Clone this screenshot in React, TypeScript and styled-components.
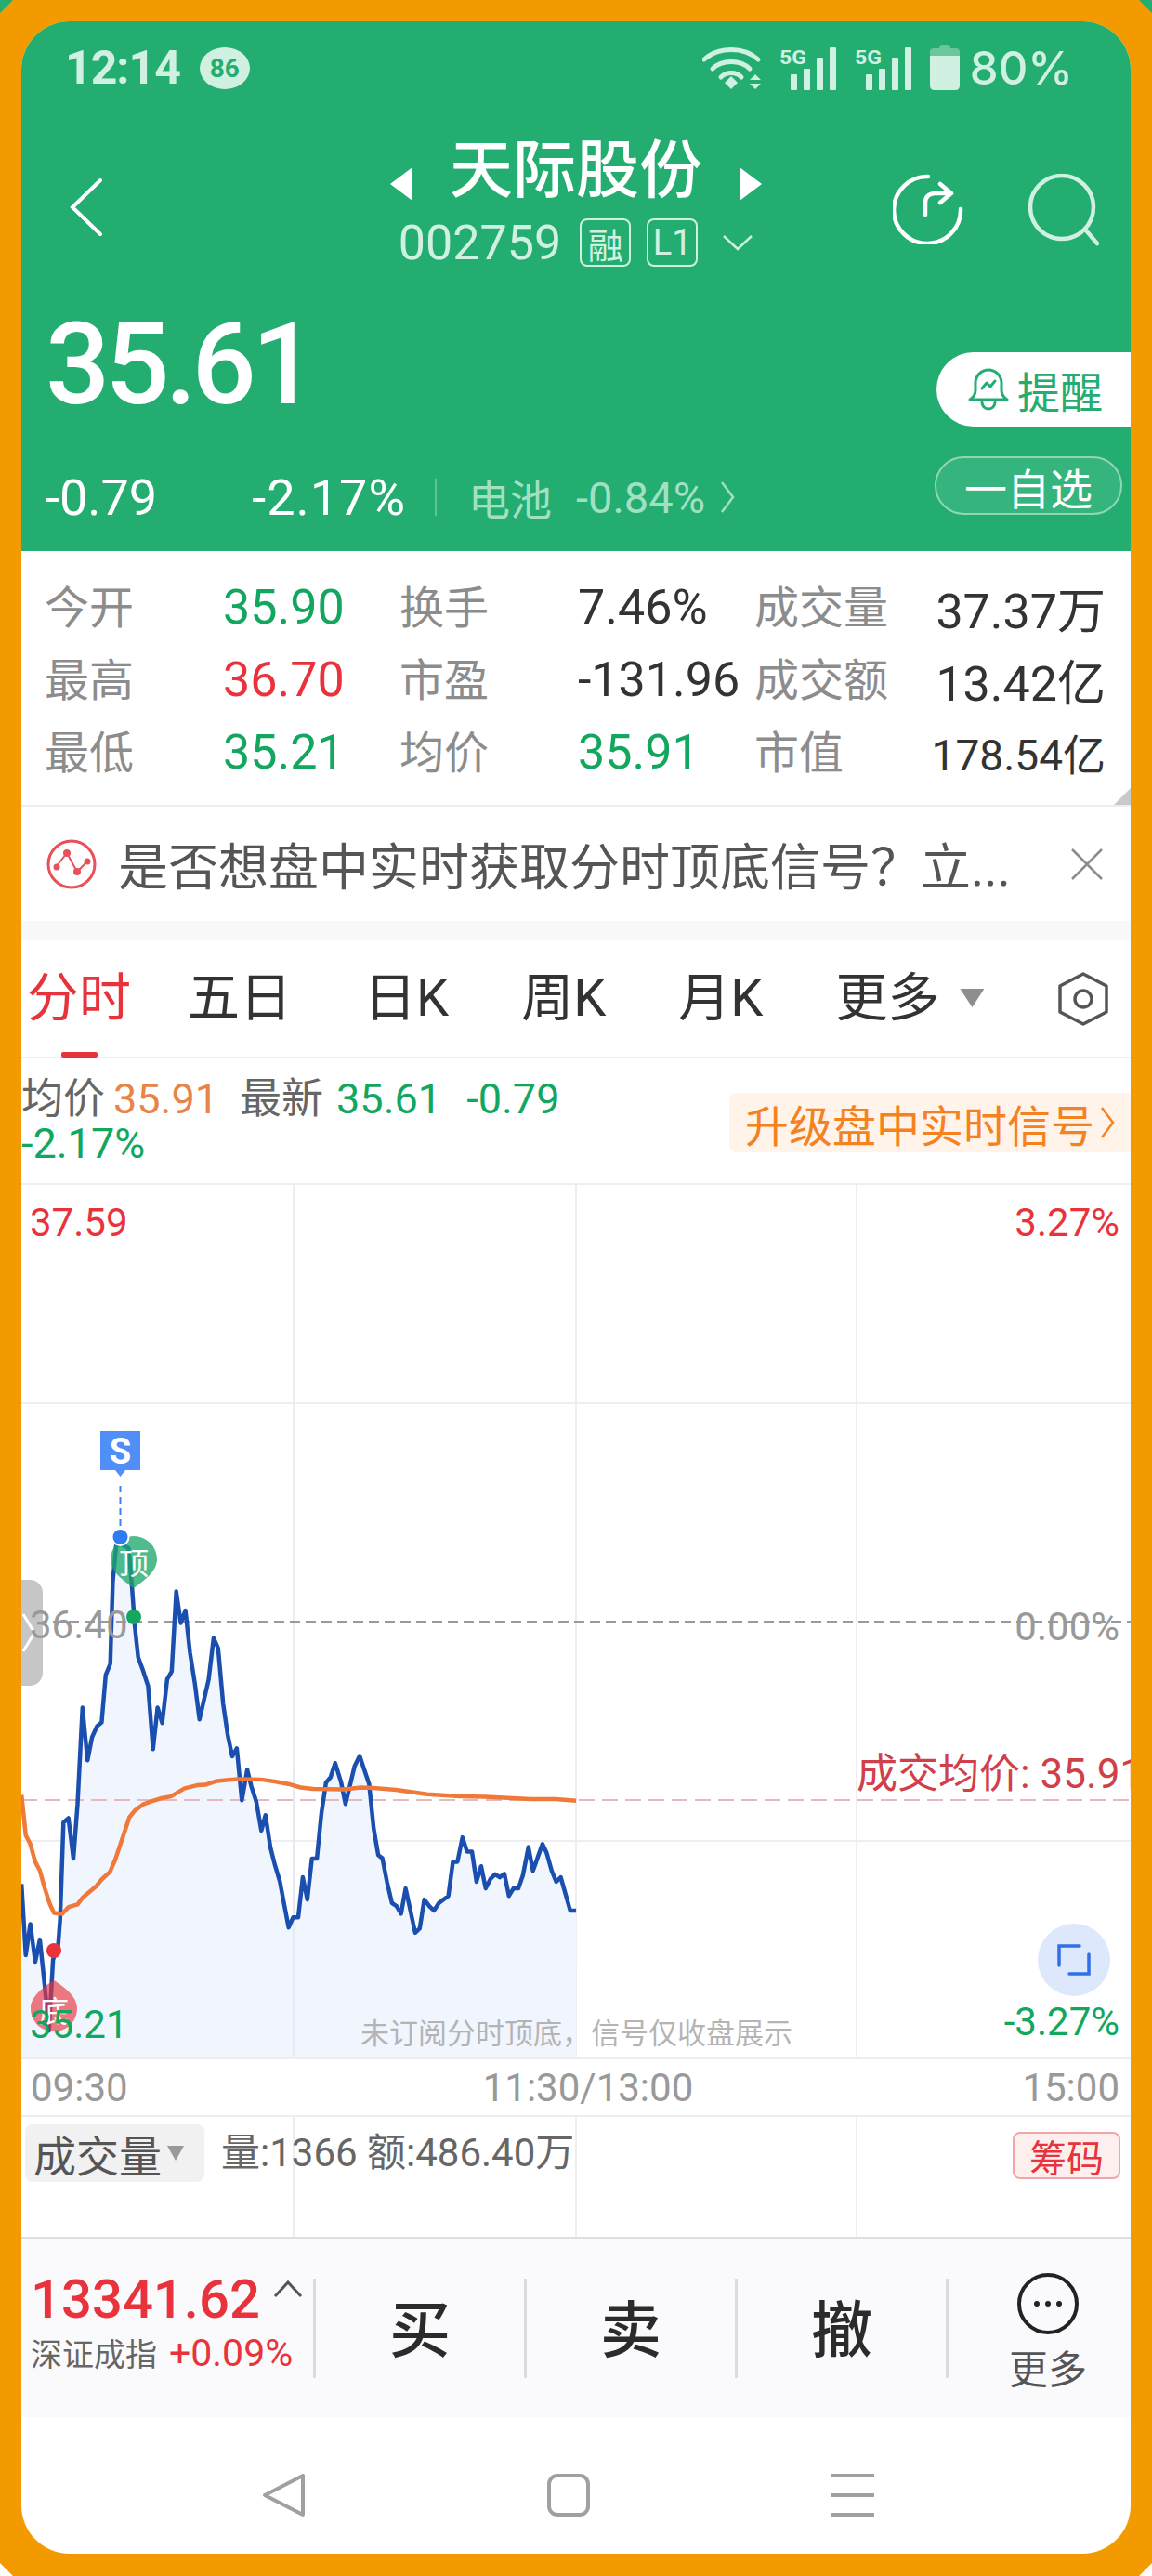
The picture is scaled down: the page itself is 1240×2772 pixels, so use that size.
import React from "react";
import styled, { createGlobalStyle } from "styled-components";

const FONT = `Roboto, "Noto Sans CJK SC", sans-serif`;
const GREEN_BG = "#23AD71";
const MINT = "#D0F1E1";
const UP = "#E8333D";
const DOWN = "#13A65F";

const GlobalStyle = createGlobalStyle`
    html, body { margin: 0; padding: 0; }
    body {
        width: 1240px;
        height: 2772px;
        overflow: hidden;
        background: linear-gradient(${GREEN_BG} 50%, #fff 50%);
        font-family: ${FONT};
    }
`;

const Frame = styled.div`
    width: 1240px;
    height: 2772px;
    box-sizing: border-box;
    padding: 23px 23px 24px;
    background: #F29A00;
    clip-path: polygon(14px 0, 1226px 0, 1240px 14px, 1240px 2758px, 1226px 2772px, 14px 2772px, 0 2758px, 0 14px);
`;

const Screen = styled.div`
    height: 100%;
    display: flex;
    flex-flow: column;
    background: #fff;
    border-radius: 52px;
    overflow: hidden;
`;

/* ---- green header ---- */
const Header = styled.header`
    height: 570px;
    flex: none;
    background: ${GREEN_BG};
    display: flex;
    flex-flow: column;
`;

const StatusBar = styled.div`
    height: 100px;
    padding: 0 62px 0 47px;
    display: flex;
    align-items: center;
    justify-content: space-between;
    color: ${MINT};
`;

const StatusLeft = styled.div`
    display: flex;
    align-items: center;
    gap: 21px;
`;

const Clock = styled.span`
    font-size: 50px;
    font-weight: 700;
    letter-spacing: -1px;
`;

const Badge = styled.span`
    width: 54px;
    height: 45px;
    border-radius: 50%;
    background: ${MINT};
    color: ${GREEN_BG};
    font-size: 28px;
    font-weight: 700;
    display: flex;
    align-items: center;
    justify-content: center;
`;

const StatusRight = styled.div`
    display: flex;
    align-items: center;
    gap: 19px;
`;

const BatteryText = styled.span`
    font-family: Inter, sans-serif;
    font-size: 49px;
    font-weight: 500;
    margin-left: -8px;
`;

const NavRow = styled.div`
    height: 180px;
    padding: 0 52px;
    display: grid;
    grid-template-columns: 1fr auto 1fr;
    align-items: start;
`;

const BackIcon = styled.svg`
    margin-top: 68px;
    display: block;
`;

const TitleBlock = styled.div`
    display: flex;
    flex-flow: column;
    align-items: center;
`;

const TitleRow = styled.div`
    display: flex;
    align-items: center;
    gap: 40px;
    height: 110px;
    margin-top: 6px;
    & > svg { margin-top: 28px; }
`;

const Title = styled.h1`
    margin: 0;
    color: #fff;
    font-size: 68px;
    line-height: 78px;
    font-weight: 500;
`;

const CodeRow = styled.div`
    display: flex;
    align-items: center;
    margin-top: -6px;
    color: ${MINT};
    height: 56px;
    & > svg { margin-left: 9px; }
`;

const Code = styled.span`
    font-size: 52px;
    margin-right: 20px;
`;

const Tag = styled.span`
    width: 55px;
    height: 52px;
    box-sizing: border-box;
    border: 2px solid ${MINT};
    border-radius: 8px;
    margin-right: 17px;
    font-size: 38px;
    display: flex;
    align-items: center;
    justify-content: center;
`;

const NavActions = styled.div`
    justify-self: end;
    display: flex;
    gap: 70px;
    margin: 64px -18px 0 0;
`;

const PriceArea = styled.div`
    flex: 1;
    display: flex;
    justify-content: space-between;
    padding-left: 26px;
`;

const PriceColumn = styled.div`
    display: flex;
    flex-flow: column;
`;

const Price = styled.div`
    color: #fff;
    font-size: 122px;
    line-height: 120px;
    font-weight: 500;
    letter-spacing: -5px;
    margin-top: 30px;
`;

const ChangeRow = styled.div`
    display: flex;
    align-items: center;
    height: 60px;
    margin-top: 52px;
    color: #fff;
    font-size: 54px;
`;

const ChangeGap = styled.span`
    margin-left: 102px;
    letter-spacing: 1px;
`;

const RowDivider = styled.i`
    width: 2px;
    height: 40px;
    background: #5CC596;
    margin: 0 34px 0 31px;
`;

const SectorName = styled.span`
    color: #A2E0C2;
    font-size: 45px;
`;

const SectorChange = styled.span`
    color: #A2E0C2;
    font-size: 47px;
    margin: 0 16px 0 26px;
`;

const PriceButtons = styled.div`
    display: flex;
    flex-flow: column;
    align-items: flex-end;
    margin-top: 76px;
`;

const RemindButton = styled.div`
    width: 209px;
    height: 80px;
    box-sizing: border-box;
    padding-left: 34px;
    background: #fff;
    border-radius: 40px 0 0 40px;
    color: ${GREEN_BG};
    font-size: 46px;
    display: flex;
    align-items: center;
    gap: 9px;
`;

const WatchButton = styled.div`
    width: 202px;
    height: 63px;
    box-sizing: border-box;
    margin: 32px 9px 0 0;
    border: 2px solid #8FD6B5;
    border-radius: 32px;
    background: rgba(255, 255, 255, 0.09);
    color: #fff;
    font-size: 46px;
    display: flex;
    align-items: center;
    justify-content: center;
`;

/* ---- quote table ---- */
const Stats = styled.section`
    position: relative;
    height: 275px;
    flex: none;
    box-sizing: border-box;
    padding: 21px 27px 0 25px;
    display: grid;
    grid-template-columns: 192px 190px 192px 190px auto 1fr;
    grid-auto-rows: 78px;
    align-items: center;
    border-bottom: 2px solid #EEEEF0;
    &::after {
        content: "";
        position: absolute;
        right: 0;
        bottom: 0;
        width: 18px;
        height: 18px;
        background: #C9C9CC;
        clip-path: polygon(100% 0, 100% 100%, 0 100%);
    }
`;

const StatLabel = styled.span`
    color: #8C8C8C;
    font-size: 48px;
    margin-top: -7px;
`;

const StatValue = styled.span<{ $color?: string; $end?: boolean; $small?: boolean }>`
    color: ${p => p.$color ?? "#333"};
    font-size: ${p => (p.$small ? 46 : 52)}px;
    text-align: ${p => (p.$end ? "right" : "left")};
    white-space: nowrap;
`;

/* ---- signal banner ---- */
const Banner = styled.section`
    height: 123px;
    flex: none;
    display: flex;
    align-items: center;
    padding: 0 29px 0 27px;
    border-bottom: 20px solid #F8F8F9;
`;

const BannerText = styled.span`
    flex: 1;
    margin-left: 23px;
    color: #555;
    font-size: 54px;
    white-space: nowrap;
`;

/* ---- tabs ---- */
const Tabs = styled.nav`
    position: relative;
    height: 128px;
    flex: none;
    padding-left: 6px;
    display: flex;
    align-items: center;
    gap: 78px;
    box-sizing: border-box;
    border-bottom: 2px solid #EEEEF0;
`;

const Tab = styled.span<{ $active?: boolean }>`
    position: relative;
    color: ${p => (p.$active ? UP : "#333")};
    font-size: 56px;
    line-height: 128px;
    &:first-child { margin-right: -17px; }
    ${p => p.$active && `
        &::after {
            content: "";
            position: absolute;
            left: 37px;
            bottom: 0;
            width: 39px;
            height: 6px;
            border-radius: 2px;
            background: ${UP};
        }
    `}
`;

const TabCaret = styled.i`
    width: 26px;
    height: 20px;
    margin-left: -56px;
    background: #8E8E8E;
    clip-path: polygon(0 0, 100% 0, 50% 100%);
`;

const TabSetting = styled.svg`
    position: absolute;
    left: 1115px;
    top: 35px;
`;

/* ---- legend ---- */
const Legend = styled.section`
    height: 136px;
    flex: none;
    box-sizing: border-box;
    padding-top: 20px;
    display: flex;
    justify-content: space-between;
    border-bottom: 2px solid #EEEEF0;
`;

const LegendText = styled.div`
    width: 620px;
    font-size: 45px;
    line-height: 48px;
    color: #666;
`;

const LegendValue = styled.span<{ $color: string; $lead?: number; $gap?: number }>`
    color: ${p => p.$color};
    margin: 0 ${p => p.$gap ?? 0}px 0 ${p => p.$lead ?? 0}px;
`;

const UpgradePill = styled.div`
    width: 432px;
    height: 64px;
    margin-top: 17px;
    box-sizing: border-box;
    padding-left: 17px;
    background: #FFF3EA;
    border-radius: 8px 0 0 8px;
    color: #F58220;
    font-size: 47px;
    display: flex;
    align-items: center;
    gap: 6px;
    white-space: nowrap;
`;

/* ---- chart ---- */
const ChartBox = styled.section`
    position: relative;
    height: 939px;
    flex: none;
    overflow: hidden;
`;

const ChartSvg = styled.svg`
    display: block;
`;

const ChartLabel = styled.span<{ $color: string; $top: number; $left?: number; $right?: number; $large?: boolean }>`
    position: absolute;
    top: ${p => p.$top}px;
    ${p => (p.$left !== undefined ? `left: ${p.$left}px;` : "")}
    ${p => (p.$right !== undefined ? `right: ${p.$right}px;` : "")}
    color: ${p => p.$color};
    font-size: ${p => (p.$large ? 44 : 42)}px;
    line-height: 48px;
    white-space: nowrap;
`;

const Watermark = styled.span`
    position: absolute;
    left: 365px;
    top: 894px;
    color: #B4B4B4;
    font-size: 31px;
    line-height: 40px;
    white-space: nowrap;
`;

const Handle = styled.div`
    position: absolute;
    left: 0;
    top: 425px;
    width: 23px;
    height: 114px;
    background: #C6C6C6;
    border-radius: 0 14px 14px 0;
    display: flex;
    align-items: center;
`;

const ExpandButton = styled.div`
    position: absolute;
    left: 1094px;
    top: 795px;
    width: 78px;
    height: 78px;
    border-radius: 50%;
    background: #DEE8FC;
    display: flex;
    align-items: center;
    justify-content: center;
`;

/* ---- axis + volume ---- */
const AxisRow = styled.div`
    height: 64px;
    flex: none;
    box-sizing: border-box;
    padding: 0 12px 0 10px;
    display: flex;
    align-items: center;
    justify-content: space-between;
    color: #999;
    font-size: 42px;
    border-top: 2px solid #EEEEF0;
    border-bottom: 2px solid #EEEEF0;
`;

const AxisMiddle = styled.span`
    margin-left: 28px;
`;

const VolumeRow = styled.section`
    height: 129px;
    flex: none;
    box-sizing: border-box;
    padding: 8px 11px 0 4px;
    display: flex;
    align-items: flex-start;
    background:
        linear-gradient(#EEEEF0, #EEEEF0) 292px 0 / 2px 100% no-repeat,
        linear-gradient(#EEEEF0, #EEEEF0) 596px 0 / 2px 100% no-repeat,
        linear-gradient(#EEEEF0, #EEEEF0) 898px 0 / 2px 100% no-repeat;
`;

const VolumePicker = styled.div`
    width: 193px;
    height: 62px;
    box-sizing: border-box;
    padding-left: 9px;
    background: #F1F1F2;
    border-radius: 8px;
    color: #555;
    font-size: 46px;
    display: flex;
    align-items: center;
    gap: 6px;
    white-space: nowrap;
`;

const VolumeCaret = styled.i`
    width: 18px;
    height: 16px;
    background: #999;
    clip-path: polygon(0 0, 100% 0, 50% 100%);
`;

const VolumeText = styled.span`
    flex: 1;
    margin-left: 18px;
    color: #666;
    font-size: 42px;
    line-height: 62px;
    white-space: nowrap;
`;

const ChipButton = styled.div`
    width: 116px;
    height: 51px;
    box-sizing: border-box;
    margin-top: 8px;
    border: 2px solid #F2A6AA;
    border-radius: 8px;
    background: #FEEFEF;
    color: ${UP};
    font-size: 40px;
    display: flex;
    align-items: center;
    justify-content: center;
`;

/* ---- trade toolbar ---- */
const Toolbar = styled.section`
    height: 194px;
    flex: none;
    box-sizing: border-box;
    display: flex;
    align-items: center;
    background: #FAFAFC;
    border-top: 2px solid #DDDDE2;
`;

const IndexBlock = styled.div`
    width: 314px;
    flex: none;
    box-sizing: border-box;
    padding-left: 10px;
    margin-top: -14px;
`;

const IndexTop = styled.div`
    display: flex;
    align-items: flex-start;
    gap: 14px;
`;

const IndexValue = styled.span`
    color: ${UP};
    font-size: 58px;
    line-height: 66px;
    font-weight: 500;
`;

const IndexCaret = styled.svg`
    margin-top: 12px;
`;

const IndexBottom = styled.div`
    display: flex;
    align-items: baseline;
    gap: 13px;
`;

const IndexName = styled.span`
    color: #666;
    font-size: 34px;
`;

const IndexChange = styled.span`
    color: ${UP};
    font-size: 41px;
`;

const ActionCell = styled.div`
    flex: none;
    width: 227px;
    height: 107px;
    box-sizing: border-box;
    padding-bottom: 6px;
    border-left: 3px solid #DCDCDF;
    display: flex;
    align-items: center;
    justify-content: center;
    color: #2B2B2B;
    font-size: 66px;
    font-weight: 500;
`;

const MoreCell = styled.div`
    flex: 1;
    height: 107px;
    box-sizing: border-box;
    padding-left: 18px;
    border-left: 3px solid #DCDCDF;
    display: flex;
    flex-flow: column;
    align-items: center;
    color: #555;
    font-size: 42px;
    line-height: 50px;
    & > svg { margin-top: -6px; flex: none; }
    & > span { margin-top: 14px; }
`;

/* ---- system nav ---- */
const SystemNav = styled.footer`
    flex: 1;
    padding: 20px 16px 0 0;
    display: flex;
    align-items: center;
    justify-content: center;
    gap: 258px;
`;

// sampled off the reference crop, scaled back to page pixels
const toPage = (pts: number[][]) => pts.map(([x, y]) => `${(x / 2.24).toFixed(1)},${(1500 + y / 2.09).toFixed(1)}`);

const PRICE_LINE = toPage([
    [52, 1100], [62, 1260], [73, 1190], [85, 1275], [96, 1225], [108, 1330], [118, 1430], [128, 1270], [140, 1240], [145, 1180],
    [153, 962], [165, 952], [177, 1043], [187, 920], [199, 703], [211, 822], [222, 770], [234, 745], [245, 737], [255, 630],
    [266, 605], [272, 420], [280, 340], [290, 335], [310, 345], [318, 430], [325, 520], [333, 590], [345, 620], [357, 655],
    [369, 797], [380, 703], [391, 738], [403, 640], [414, 622], [425, 442], [436, 513], [447, 485], [458, 580], [470, 650],
    [481, 730], [503, 640], [515, 547], [526, 570], [538, 695], [549, 765], [560, 813], [571, 795], [583, 912], [596, 843],
    [606, 880], [618, 915], [630, 980], [640, 945], [652, 1018], [663, 1058], [675, 1095], [685, 1145], [696, 1198], [707, 1175],
    [719, 1175], [730, 1085], [741, 1135], [752, 1043], [764, 1043], [775, 940], [786, 872], [797, 860], [808, 828], [822, 870],
    [833, 920], [855, 835], [867, 812], [890, 875], [901, 975], [912, 1035], [922, 1042], [933, 1095], [945, 1143], [956, 1150],
    [967, 1167], [978, 1110], [1001, 1210], [1012, 1200], [1023, 1135], [1035, 1150], [1046, 1160], [1058, 1143], [1081, 1127], [1092, 1050],
    [1103, 1050], [1115, 995], [1126, 1027], [1138, 1027], [1149, 1095], [1160, 1060], [1171, 1110], [1183, 1088], [1194, 1078], [1205, 1085],
    [1216, 1077], [1227, 1127], [1238, 1110], [1250, 1110], [1261, 1080], [1274, 1017], [1285, 1070], [1308, 1010], [1318, 1030], [1330, 1070],
    [1341, 1095], [1352, 1085], [1375, 1160], [1389, 1160],
]).join(" ");

const AVG_LINE = toPage([
    [52, 900], [62, 990], [73, 1010], [85, 1050], [96, 1070], [108, 1110], [120, 1145], [130, 1165], [150, 1167], [165, 1152],
    [187, 1146], [200, 1130], [232, 1105], [245, 1090], [265, 1073], [278, 1045], [312, 950], [325, 935], [345, 921], [365, 914],
    [390, 907], [412, 903], [445, 885], [475, 878], [495, 877], [520, 869], [545, 866], [580, 864], [630, 865], [665, 870],
    [695, 875], [725, 883], [755, 886], [830, 887], [870, 883], [900, 884], [955, 888], [1030, 898], [1110, 903], [1170, 904],
    [1280, 909], [1340, 909], [1389, 913],
]).join(" ");

const Signal = () => (
    <svg width="62" height="48" viewBox="0 0 62 48">
        <text x="0" y="20" fontFamily="Roboto, sans-serif" fontSize="21" fontWeight="700" textLength="29" lengthAdjust="spacingAndGlyphs" fill={MINT}>5G</text>
        <g fill={MINT}>
            <rect x="12" y="31" width="7" height="17" rx="1" />
            <rect x="26" y="25" width="7" height="23" rx="1" />
            <rect x="40" y="13" width="7" height="35" rx="1" />
            <rect x="54" y="2" width="7" height="46" rx="1" />
        </g>
    </svg>
);

const STATS: { label: string; value: string; color?: string; small?: boolean }[][] = [
    [
        { label: "今开", value: "35.90", color: DOWN },
        { label: "换手", value: "7.46%" },
        { label: "成交量", value: "37.37万" },
    ],
    [
        { label: "最高", value: "36.70", color: UP },
        { label: "市盈", value: "-131.96" },
        { label: "成交额", value: "13.42亿" },
    ],
    [
        { label: "最低", value: "35.21", color: DOWN },
        { label: "均价", value: "35.91", color: DOWN },
        { label: "市值", value: "178.54亿", small: true },
    ],
];

const TAB_NAMES = ["分时", "五日", "日K", "周K", "月K", "更多"];

export default function App() {
    return (
        <Frame>
            <GlobalStyle />
            <Screen>
                <Header>
                    <StatusBar>
                        <StatusLeft>
                            <Clock>12:14</Clock>
                            <Badge>86</Badge>
                        </StatusLeft>
                        <StatusRight>
                            <svg width="64" height="48" viewBox="0 0 64 48" fill="none" stroke={MINT} strokeWidth="5" strokeLinecap="round">
                                <path d="M2 15C17 1 45 1 60 15" />
                                <path d="M11 25C21 15 41 15 51 25" />
                                <path d="M20 34C26 28 36 28 42 34" />
                                <path d="M24 40L31 33L38 40L31 47Z" fill={MINT} stroke="none" />
                                <path d="M51 37L57 31L63 37ZM51 41H63L57 47Z" fill={MINT} stroke="none" />
                            </svg>
                            <Signal />
                            <Signal />
                            <svg width="32" height="50" viewBox="0 0 32 50">
                                <path d="M10 4Q10 0 14 0H18Q22 0 22 4H28Q32 4 32 8V12H0V8Q0 4 4 4Z" fill="#6BC69C" />
                                <path d="M0 12H32V44Q32 49 27 49H5Q0 49 0 44Z" fill={MINT} />
                            </svg>
                            <BatteryText>80%</BatteryText>
                        </StatusRight>
                    </StatusBar>
                    <NavRow>
                        <BackIcon width="36" height="64" viewBox="0 0 36 64" fill="none" stroke="#fff" strokeWidth="4" strokeLinecap="round">
                            <path d="M33 3L3 32L33 61" />
                        </BackIcon>
                        <TitleBlock>
                            <TitleRow>
                                <svg width="24" height="36" viewBox="0 0 24 36"><path d="M24 0V36L0 18Z" fill="#fff" /></svg>
                                <Title>天际股份</Title>
                                <svg width="24" height="36" viewBox="0 0 24 36"><path d="M0 0V36L24 18Z" fill="#fff" /></svg>
                            </TitleRow>
                            <CodeRow>
                                <Code>002759</Code>
                                <Tag>融</Tag>
                                <Tag>L1</Tag>
                                <svg width="34" height="18" viewBox="0 0 34 18" fill="none" stroke={MINT} strokeWidth="2.5">
                                    <path d="M2 2L17 16L32 2" />
                                </svg>
                            </CodeRow>
                        </TitleBlock>
                        <NavActions>
                            <svg width="76" height="76" viewBox="0 0 76 76" fill="none" stroke="#fff" strokeWidth="4.5" strokeLinecap="round" strokeLinejoin="round">
                                <path d="M38 3A36 36 0 1 0 73 38" />
                                <path d="M35 44V31Q35 22 45 21H62" />
                                <path d="M51 11L63 21L51 31" />
                            </svg>
                            <svg width="76" height="78" viewBox="0 0 76 78" fill="none" stroke={MINT} strokeWidth="4.5" strokeLinecap="round">
                                <circle cx="36" cy="36" r="34" />
                                <path d="M62 61L74 75" />
                            </svg>
                        </NavActions>
                    </NavRow>
                    <PriceArea>
                        <PriceColumn>
                            <Price>35.61</Price>
                            <ChangeRow>
                                <span>-0.79</span>
                                <ChangeGap>-2.17%</ChangeGap>
                                <RowDivider />
                                <SectorName>电池</SectorName>
                                <SectorChange>-0.84%</SectorChange>
                                <svg width="16" height="36" viewBox="0 0 16 36" fill="none" stroke="#A2E0C2" strokeWidth="2.5">
                                    <path d="M2 2L14 18L2 34" />
                                </svg>
                            </ChangeRow>
                        </PriceColumn>
                        <PriceButtons>
                            <RemindButton>
                                <svg width="44" height="46" viewBox="0 0 44 46" fill="none" stroke={GREEN_BG} strokeWidth="3" strokeLinecap="round" strokeLinejoin="round">
                                    <path d="M2 34Q8 30 8 24V16A14 14 0 0 1 36 16V24Q36 30 42 34Z" />
                                    <path d="M15 37A7 7 0 0 0 29 37" />
                                    <path d="M15 22L20 16L24 20L29 14" />
                                </svg>
                                提醒
                            </RemindButton>
                            <WatchButton>一自选</WatchButton>
                        </PriceButtons>
                    </PriceArea>
                </Header>

                <Stats>
                    {STATS.map(row => row.map((cell, i) => (
                        <React.Fragment key={cell.label}>
                            <StatLabel>{cell.label}</StatLabel>
                            <StatValue $color={cell.color} $end={i === 2} $small={cell.small}>{cell.value}</StatValue>
                        </React.Fragment>
                    )))}
                </Stats>

                <Banner>
                    <svg width="54" height="54" viewBox="0 0 54 54" fill="none" stroke="#E8505A" strokeWidth="3">
                        <circle cx="27" cy="27" r="25" />
                        <path d="M10 30L22 15L33 35L45 23" strokeWidth="2" />
                        <circle cx="22" cy="15" r="4" fill="#E8505A" stroke="none" />
                        <circle cx="11" cy="30" r="3.5" fill="#E8505A" stroke="none" />
                        <circle cx="33" cy="35" r="4" fill="#E8505A" stroke="none" />
                        <circle cx="44" cy="24" r="3.5" fill="#E8505A" stroke="none" />
                    </svg>
                    <BannerText>是否想盘中实时获取分时顶底信号？立...</BannerText>
                    <svg width="36" height="36" viewBox="0 0 36 36" stroke="#8C8C8C" strokeWidth="2.5">
                        <path d="M2 2L34 34M34 2L2 34" />
                    </svg>
                </Banner>

                <Tabs>
                    {TAB_NAMES.map((name, i) => <Tab key={name} $active={i === 0}>{name}</Tab>)}
                    <TabCaret />
                    <TabSetting width="56" height="58" viewBox="0 0 56 58" fill="none" stroke="#555" strokeWidth="3.5" strokeLinejoin="round">
                        <path d="M28 2L53 15V43L28 56L3 43V15Z" />
                        <circle cx="28" cy="29" r="9" />
                    </TabSetting>
                </Tabs>

                <Legend>
                    <LegendText>
                        均价<LegendValue $color="#E8844A" $lead={9} $gap={23}>35.91</LegendValue>最新<LegendValue $color={DOWN} $lead={14}>35.61</LegendValue>{" "}
                        <LegendValue $color={DOWN} $lead={16}>-0.79</LegendValue>{" "}
                        <LegendValue $color={DOWN}>-2.17%</LegendValue>
                    </LegendText>
                    <UpgradePill>
                        升级盘中实时信号
                        <svg width="16" height="36" viewBox="0 0 16 36" fill="none" stroke="#F58220" strokeWidth="2.5">
                            <path d="M2 2L14 18L2 34" />
                        </svg>
                    </UpgradePill>
                </Legend>

                <ChartBox>
                    <ChartSvg width="1194" height="939" viewBox="23 1274 1194 939">
                        <g stroke="#EEEEF0" strokeWidth="2">
                            <path d="M316 1274V2213M620 1274V2213M922 1274V2213" />
                            <path d="M23 1509H1217M23 1980H1217" />
                        </g>
                        <polygon points={`23,2213 ${PRICE_LINE} 620,2213`} fill="#F0F5FE" />
                        <path d="M316 1900V2213" stroke="#E6EAF2" strokeWidth="2" />
                        <path d="M23 1744H1217" stroke="#9A9A9A" strokeWidth="2" strokeDasharray="11 6" />
                        <path d="M23 1936H1217" stroke="#E5B9BE" strokeWidth="2" strokeDasharray="17 8" />
                        <polyline points={PRICE_LINE} fill="none" stroke="#1A4FAF" strokeWidth="4.5" strokeLinejoin="round" />
                        <polyline points={AVG_LINE} fill="none" stroke="#F0793A" strokeWidth="4.5" strokeLinejoin="round" />

                        <path d="M108 1539H151V1581H135L129.5 1588L124 1581H108Z" fill="#4F8FF7" />
                        <text x="129.5" y="1574" textAnchor="middle" fontFamily="Roboto, sans-serif" fontSize="38" fontWeight="700" fill="#fff">S</text>
                        <path d="M129.5 1598V1645" stroke="#3E80F0" strokeWidth="2" strokeDasharray="7 5" />

                        <path d="M119 1677A25 25 0 0 1 169 1677C169 1690 155 1700 144 1708C133 1700 119 1690 119 1677Z" fill="#1FA86C" fillOpacity="0.78" />
                        <text x="144" y="1693" textAnchor="middle" fontFamily={FONT} fontSize="32" fill="#fff">顶</text>
                        <circle cx="129.5" cy="1653" r="9" fill="#2F7BF0" stroke="#fff" strokeWidth="2" />
                        <circle cx="144" cy="1739" r="8" fill={DOWN} />

                        <path d="M33 2160A25 25 0 0 0 83 2160C83 2147 69 2137 58 2130C47 2137 33 2147 33 2160Z M33 2160C33 2175 45 2185 58 2185C71 2185 83 2175 83 2160Z" fill="#E8333D" fillOpacity="0.65" />
                        <text x="58" y="2175" textAnchor="middle" fontFamily={FONT} fontSize="32" fill="#fff">底</text>
                        <circle cx="58" cy="2098" r="8" fill={UP} />
                    </ChartSvg>

                    <Handle>
                        <svg width="16" height="44" viewBox="0 0 16 44" fill="none" stroke="#fff" strokeWidth="3">
                            <path d="M2 2L14 22L2 42" />
                        </svg>
                    </Handle>
                    <ChartLabel $color={UP} $top={17} $left={9}>37.59</ChartLabel>
                    <ChartLabel $color={UP} $top={17} $right={12}>3.27%</ChartLabel>
                    <ChartLabel $color="#999" $top={450} $left={9}>36.40</ChartLabel>
                    <ChartLabel $color="#999" $top={452} $right={12}>0.00%</ChartLabel>
                    <ChartLabel $color={DOWN} $top={880} $left={9}>35.21</ChartLabel>
                    <ChartLabel $color={DOWN} $top={877} $right={12}>-3.27%</ChartLabel>
                    <ChartLabel $color="#D0404A" $top={610} $left={899} $large>成交均价: 35.91</ChartLabel>
                    <Watermark>未订阅分时顶底，信号仅收盘展示</Watermark>
                    <ExpandButton>
                        <svg width="36" height="34" viewBox="0 0 36 34" fill="none" stroke="#2F6FE8" strokeWidth="3.5" strokeLinecap="round">
                            <path d="M2 23V2H24" />
                            <path d="M34 11V32H13" />
                        </svg>
                    </ExpandButton>
                </ChartBox>

                <AxisRow>
                    <span>09:30</span>
                    <AxisMiddle>11:30/13:00</AxisMiddle>
                    <span>15:00</span>
                </AxisRow>

                <VolumeRow>
                    <VolumePicker>成交量<VolumeCaret /></VolumePicker>
                    <VolumeText>量:1366 额:486.40万</VolumeText>
                    <ChipButton>筹码</ChipButton>
                </VolumeRow>

                <Toolbar>
                    <IndexBlock>
                        <IndexTop>
                            <IndexValue>13341.62</IndexValue>
                            <IndexCaret width="32" height="20" viewBox="0 0 32 20" fill="none" stroke="#555" strokeWidth="3">
                                <path d="M2 18L16 3L30 18" />
                            </IndexCaret>
                        </IndexTop>
                        <IndexBottom>
                            <IndexName>深证成指</IndexName>
                            <IndexChange>+0.09%</IndexChange>
                        </IndexBottom>
                    </IndexBlock>
                    <ActionCell>买</ActionCell>
                    <ActionCell>卖</ActionCell>
                    <ActionCell>撤</ActionCell>
                    <MoreCell>
                        <svg width="66" height="66" viewBox="0 0 66 66" fill="none" stroke="#222" strokeWidth="4">
                            <circle cx="33" cy="33" r="31" />
                            <g fill="#222" stroke="none">
                                <circle cx="21" cy="33" r="3" />
                                <circle cx="33" cy="33" r="3" />
                                <circle cx="45" cy="33" r="3" />
                            </g>
                        </svg>
                        <span>更多</span>
                    </MoreCell>
                </Toolbar>

                <SystemNav>
                    <svg width="48" height="48" viewBox="0 0 48 48" fill="none" stroke="#A0A0A0" strokeWidth="4" strokeLinejoin="round">
                        <path d="M44 3V45L3 24Z" />
                    </svg>
                    <svg width="48" height="48" viewBox="0 0 48 48" fill="none" stroke="#A0A0A0" strokeWidth="4">
                        <rect x="3" y="3" width="42" height="42" rx="9" />
                    </svg>
                    <svg width="48" height="48" viewBox="0 0 48 48" stroke="#A0A0A0" strokeWidth="4">
                        <path d="M1 3H47M1 24H47M1 45H47" />
                    </svg>
                </SystemNav>
            </Screen>
        </Frame>
    );
}
